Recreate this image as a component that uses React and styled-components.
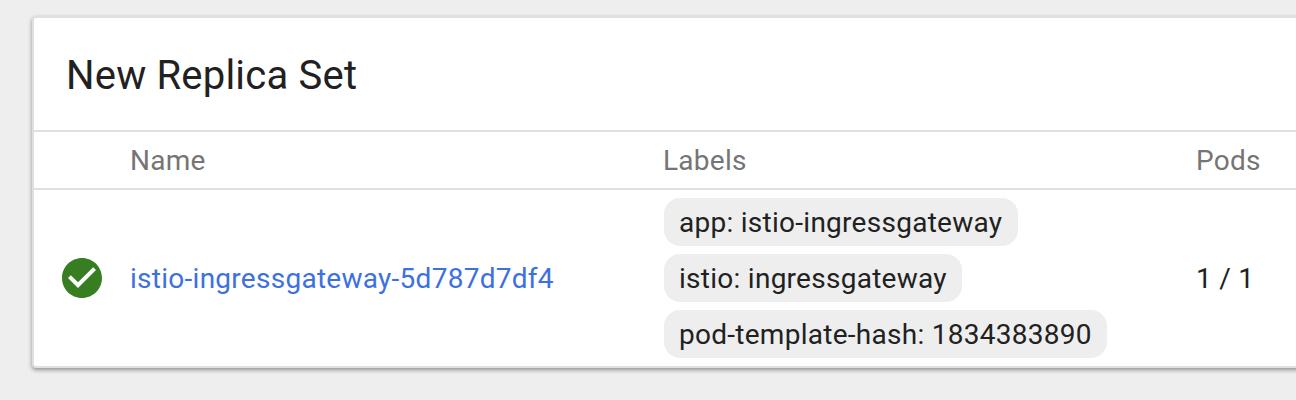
import React from "react";
import styled, { createGlobalStyle } from "styled-components";

const Global = createGlobalStyle`
  * { box-sizing: border-box; }
  body { margin: 0; background: #eee; overflow: hidden; font-family: Roboto, "Liberation Sans", sans-serif; }
`;
const Page = styled.main`
  height: 400px;
  padding: 16px 0 0 32px;
  overflow: hidden;
`;
const Card = styled.section`
  width: 1400px;
  height: 352px;
  background: #fff;
  border: 2px solid #e0e0e0;
  border-radius: 4px;
  box-shadow: 0 2px 4px rgba(0, 0, 0, 0.4);
`;
const Title = styled.h1`
  margin: 0;
  height: 112px;
  padding-left: 32px;
  font-size: 40px;
  font-weight: 400;
  line-height: 115px;
  letter-spacing: 0.2px;
  color: #212121;
`;
const Row = styled.div`
  display: grid;
  grid-template-columns: 96px 533px 533px 1fr;
  align-items: center;
  height: ${(p) => p.$height}px;
  border-top: 2px solid #e0e0e0;
  font-size: 28px;
  letter-spacing: 0.27px;
  color: ${(p) => (p.$muted ? "#757575" : "#212121")};
`;
const Status = styled.svg`
  display: block;
  width: 48px;
  height: 48px;
  margin-left: 24px;
`;
const NameLink = styled.a`
  color: #3d70e0;
  text-decoration: none;
`;
const Labels = styled.div`
  display: flex;
  flex-direction: column;
  align-items: flex-start;
  gap: 8px;
  padding-left: 1px;
`;
const Chip = styled.span`
  height: 48px;
  padding: 0 15.5px 0 15px;
  border-radius: 16px;
  background: #eee;
  line-height: 49px;
  white-space: nowrap;
`;

const labels = ["app: istio-ingressgateway", "istio: ingressgateway", "pod-template-hash: 1834383890"];

export default function App() {
  return (
    <Page>
      <Global />
      <Card>
        <Title>New Replica Set</Title>
        <Row $height={58} $muted>
          <span />
          <span>Name</span>
          <span>Labels</span>
          <span>Pods</span>
        </Row>
        <Row $height={178}>
          <Status viewBox="0 0 24 24" aria-label="Running">
            <path fill="#377e22" d="M12 2C6.48 2 2 6.48 2 12s4.48 10 10 10 10-4.48 10-10S17.52 2 12 2zm-2 15l-5-5 1.41-1.41L10 14.17l7.59-7.59L19 8l-9 9z" />
          </Status>
          <NameLink>istio-ingressgateway-5d787d7df4</NameLink>
          <Labels>
            {labels.map((label) => (
              <Chip key={label}>{label}</Chip>
            ))}
          </Labels>
          <span>1 / 1</span>
        </Row>
      </Card>
    </Page>
  );
}
